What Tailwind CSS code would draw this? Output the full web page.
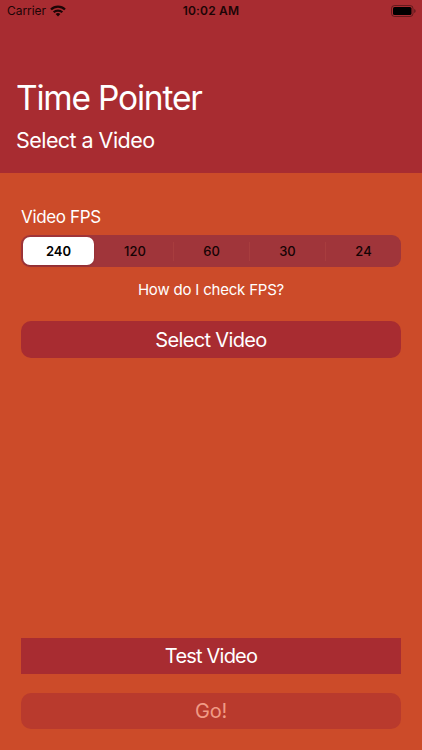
<!DOCTYPE html>
<html lang="en">
<head>
  <meta charset="UTF-8"/>
  <meta name="viewport" content="width=device-width, initial-scale=1.0"/>
  <title>Time Pointer</title>
  <script src="https://cdn.jsdelivr.net/npm/@tailwindcss/browser@4"></script>
</head>
<body class="h-[750px] flex flex-col overflow-hidden bg-[#cc4b29] text-white font-['Inter',sans-serif]">

  <!-- Header -->
  <header class="h-[173px] shrink-0 bg-[#a82c31]">
    <!-- Status bar -->
    <div class="h-[22px] grid grid-cols-3 items-center pl-[7px] pr-[6px] text-[12px] text-[#1c0506]">
      <div class="flex items-center gap-[4px]">
        <span class="tracking-[-0.05px]">Carrier</span>
        <svg class="w-[16px] h-[12px]" viewBox="0 0 16 12" fill="none" stroke="currentColor" stroke-width="2.3">
          <path d="M1 4.5a9.9 9.9 0 0 1 14 0"/>
          <path d="M3.7 7.3a6.1 6.1 0 0 1 8.6 0"/>
          <path d="M8 11.6 5.6 9.1a3.4 3.4 0 0 1 4.8 0z" fill="currentColor" stroke="none"/>
        </svg>
      </div>
      <span class="text-center font-semibold tracking-[0.2px] -ml-px">10:02 AM</span>
      <svg class="w-[25px] h-[12px] justify-self-end" viewBox="0 0 25 12">
        <rect x="0.5" y="0.5" width="21.5" height="11" rx="3" fill="none" stroke="#000" stroke-opacity="0.4"/>
        <rect x="2" y="2" width="18.5" height="8" rx="1.6" fill="#000"/>
        <path d="M23.3 4v4a2.2 2.2 0 0 0 0-4z" fill="#000" fill-opacity="0.5"/>
      </svg>
    </div>
    <div class="pl-[16px] pt-[55px]">
      <h1 class="text-[33.5px] leading-[42px] tracking-[-1.2px]">Time Pointer</h1>
      <h2 class="mt-[7px] text-[21.5px] leading-[28px] tracking-[-0.55px]">Select a Video</h2>
    </div>
  </header>

  <main class="flex-1 flex flex-col px-[21px] pt-[33px] pb-[21px]">
    <p class="text-[17px] leading-[22px] tracking-[-0.35px]">Video FPS</p>

    <!-- FPS picker -->
    <div class="mt-[7px] h-[32px] grid grid-cols-5 items-center rounded-[9px] bg-[#a0353a] text-[13px] text-center text-[#150304] font-medium">
      <div class="h-[28px] ml-[2px] mr-[3px] pt-px flex items-center justify-center rounded-[7px] bg-white text-black font-semibold shadow-sm">240</div>
      <div class="h-[19px] leading-[19px]">120</div>
      <div class="h-[19px] leading-[19px] border-l border-[#a83d3e]">60</div>
      <div class="h-[19px] leading-[19px] border-l border-[#a83d3e]">30</div>
      <div class="h-[19px] leading-[19px] border-l border-[#a83d3e]">24</div>
    </div>

    <a class="mt-[13px] text-center text-[15px] leading-[20px] tracking-[-0.2px]">How do I check FPS?</a>

    <button class="mt-[21px] h-[37px] rounded-[10px] bg-[#a82c31] text-[20px] tracking-[-0.65px]">Select Video</button>

    <button class="mt-auto h-[36px] bg-[#a82c31] text-[20px] tracking-[-0.8px]">Test Video</button>
    <button class="mt-[19px] h-[36px] rounded-[10px] bg-[#b93a2d] text-[20px] tracking-[-0.2px] text-[#f09b85]">Go!</button>
  </main>
</body>
</html>
